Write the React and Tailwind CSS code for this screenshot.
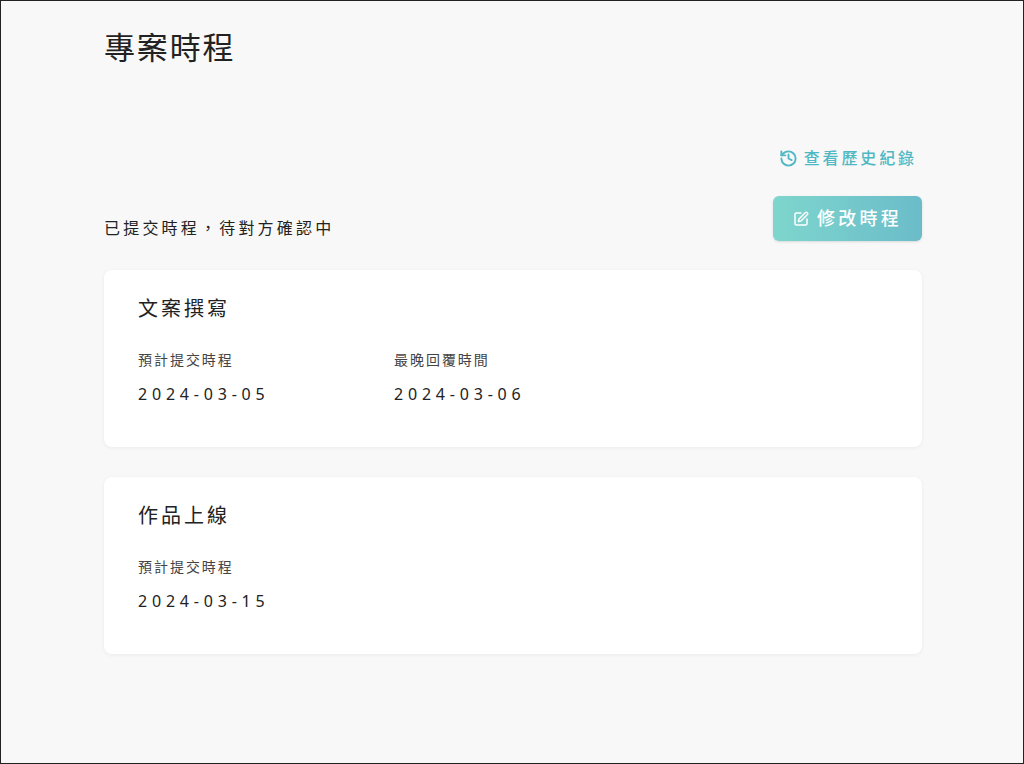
import React from 'react';
import { History, SquarePen } from 'lucide-react';

const font = { fontFamily: '"Noto Sans", "Noto Sans CJK TC", sans-serif' };

const stages = [
  { title: '文案撰寫', fields: [['預計提交時程', '2024-03-05'], ['最晚回覆時間', '2024-03-06']] },
  { title: '作品上線', fields: [['預計提交時程', '2024-03-15']] },
];

export default function App() {
  return (
    <div style={font} className="w-[1024px] h-[764px] bg-[#f8f8f8] border border-[#222] text-[#222]">
      <div className="w-[818px] ml-[103px]">
        <h1 className="text-[31px] font-normal mt-[22px] leading-[48px] tracking-[0.06em]">專案時程</h1>
        <div className="flex justify-end mt-[75px]">
          <button className="flex items-center gap-1.5 mr-[5px] text-[#4fb8c4] text-[16px] font-medium tracking-[0.18em]">
            <History size={19} strokeWidth={2.4} />
            查看歷史紀錄
          </button>
        </div>
        <div className="flex justify-between items-end mt-[26px]">
          <p className="text-[16px] tracking-[0.2em] mb-[1px]">已提交時程，待對方確認中</p>
          <button className="flex items-center gap-2 h-[45px] w-[149px] justify-center rounded-md bg-gradient-to-r from-[#7ed6cd] to-[#6bbcc9] text-white text-[18px] font-medium tracking-[0.18em] shadow-sm">
            <SquarePen size={16} strokeWidth={2.2} />
            修改時程
          </button>
        </div>
        <div className="flex flex-col gap-[30px] mt-[29px]">
          {stages.map((s) => (
            <div key={s.title} className="bg-white rounded-lg shadow-[0_1px_4px_rgba(0,0,0,0.06)] h-[177px] px-[34px] pt-[24px]">
              <h2 className="text-[20px] font-normal tracking-[0.15em] leading-[30px]">{s.title}</h2>
              <div className="flex mt-[26px]">
                {s.fields.map(([label, value]) => (
                  <div key={label} className="w-[256px]">
                    <div className="text-[14px] text-[#444] tracking-[0.14em] leading-[20px]">{label}</div>
                    <div className="text-[16px] tracking-[0.3em] mt-[13px] leading-[22px]">{value}</div>
                  </div>
                ))}
              </div>
            </div>
          ))}
        </div>
      </div>
    </div>
  );
}
